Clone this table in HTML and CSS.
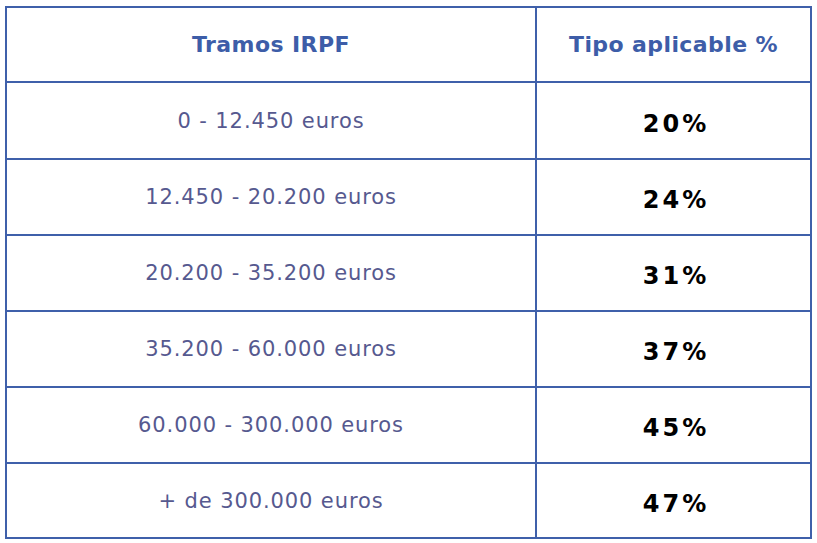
FILE: index.html
```html
<!DOCTYPE html>
<html lang="es">
<head>
<meta charset="utf-8">
<title>Tramos IRPF</title>
<link rel="stylesheet" href="styles.css">
</head>
<body>
<table class="irpf">
  <thead>
    <tr class="head-row">
      <th class="col-tramo">Tramos IRPF</th>
      <th class="col-tipo">Tipo aplicable %</th>
    </tr>
  </thead>
  <tbody>
    <tr class="row-first"><td class="tramo">0 - 12.450 euros</td><td class="tipo">20%</td></tr>
    <tr><td class="tramo">12.450 - 20.200 euros</td><td class="tipo">24%</td></tr>
    <tr><td class="tramo">20.200 - 35.200 euros</td><td class="tipo">31%</td></tr>
    <tr><td class="tramo">35.200 - 60.000 euros</td><td class="tipo">37%</td></tr>
    <tr><td class="tramo">60.000 - 300.000 euros</td><td class="tipo">45%</td></tr>
    <tr class="row-last"><td class="tramo">+ de 300.000 euros</td><td class="tipo">47%</td></tr>
  </tbody>
</table>
</body>
</html>
```

FILE: styles.css
```css
html, body {
  margin: 0;
  padding: 0;
  background: #ffffff;
}

body {
  padding: 6px 0 0 5px;
}

.irpf {
  border-collapse: collapse;
  width: 807px;
  table-layout: fixed;
}

.irpf th,
.irpf td {
  border: 2px solid #3f60aa;
  padding: 0;
  text-align: center;
  vertical-align: middle;
}

.col-tramo {
  width: 528px;
}

.head-row {
  height: 75px;
}

.irpf tbody tr {
  height: 76px;
}

.irpf tbody tr.row-first {
  height: 77px;
}

.irpf tbody tr.row-last {
  height: 75px;
}

.irpf th {
  font-family: "DejaVu Sans", "Liberation Sans", sans-serif;
  font-weight: 700;
  font-size: 22px;
  letter-spacing: 0.4px;
  color: #3d5da8;
}

.tramo {
  font-family: "DejaVu Sans", "Liberation Sans", sans-serif;
  font-weight: 400;
  font-size: 21px;
  letter-spacing: 0.9px;
  color: #56598f;
}

.tipo {
  font-family: "DejaVu Sans", "Liberation Sans", sans-serif;
  font-weight: 700;
  font-size: 24px;
  letter-spacing: 3px;
  color: #000000;
  padding: 6px 0 0 5px !important;
}
```
